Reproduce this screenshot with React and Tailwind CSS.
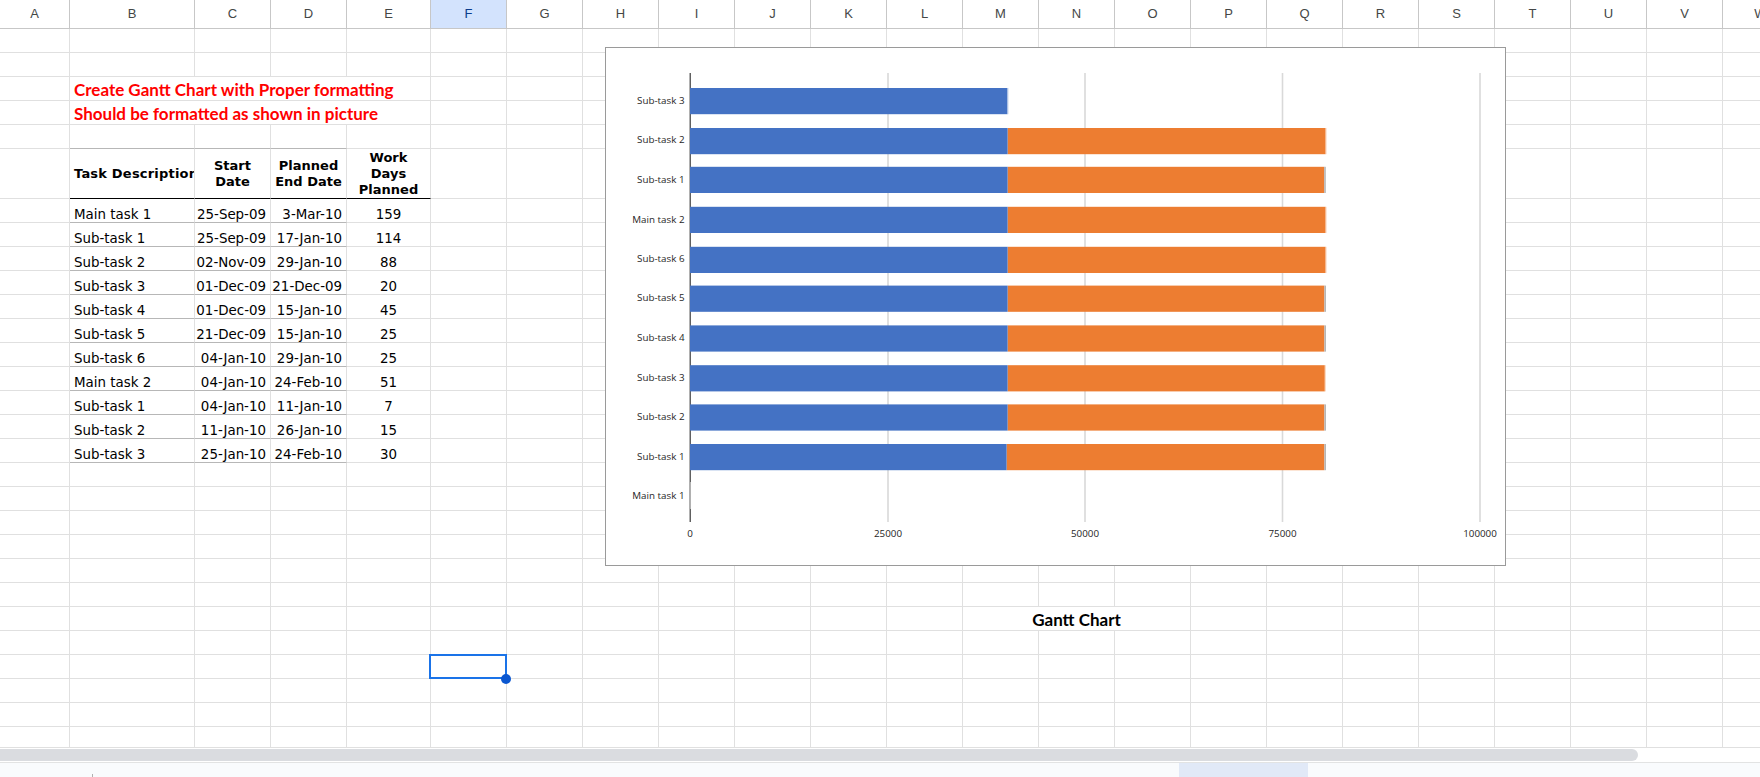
import React from "react";

const COLS = "ABCDEFGHIJKLMNOPQRSTUVW".split("");
const ROW_GRID = "grid grid-cols-[70px_125px_76px_76px_84px_repeat(18,76px)]";
const CELL = "border-r border-b border-[#e0e0e0] min-w-0 overflow-hidden whitespace-nowrap";
const TABLE_FONT = "[font-family:'DejaVu_Sans',sans-serif] text-[13.4px] leading-[14px] text-black";
const HEAD_FONT = "[font-family:'DejaVu_Sans',sans-serif] text-[13px] font-bold leading-[16px] text-black";
const CALIBRI = "[font-family:Lato,sans-serif] font-bold text-[17px] leading-[20px] pt-[2px]";

const TASKS = [
  ["Main task 1", "25-Sep-09", "3-Mar-10", "159"],
  ["Sub-task 1", "25-Sep-09", "17-Jan-10", "114"],
  ["Sub-task 2", "02-Nov-09", "29-Jan-10", "88"],
  ["Sub-task 3", "01-Dec-09", "21-Dec-09", "20"],
  ["Sub-task 4", "01-Dec-09", "15-Jan-10", "45"],
  ["Sub-task 5", "21-Dec-09", "15-Jan-10", "25"],
  ["Sub-task 6", "04-Jan-10", "29-Jan-10", "25"],
  ["Main task 2", "04-Jan-10", "24-Feb-10", "51"],
  ["Sub-task 1", "04-Jan-10", "11-Jan-10", "7"],
  ["Sub-task 2", "11-Jan-10", "26-Jan-10", "15"],
  ["Sub-task 3", "25-Jan-10", "24-Feb-10", "30"],
];

// top to bottom, as the chart draws them
const BARS = [
  { label: "Sub-task 3", base: 104, top: 88, blue: 1007.6 },
  { label: "Sub-task 2", base: 143, top: 128, blue: 1007.6, end: 1325.6 },
  { label: "Sub-task 1", base: 183, top: 166.8, blue: 1007.6, end: 1324.2, cap: true },
  { label: "Main task 2", base: 222.5, top: 206.8, blue: 1007.6, end: 1325.6 },
  { label: "Sub-task 6", base: 262, top: 246.8, blue: 1007.6, end: 1325.6 },
  { label: "Sub-task 5", base: 301, top: 285.6, blue: 1007.6, end: 1324.4, cap: true },
  { label: "Sub-task 4", base: 340.5, top: 325.4, blue: 1007.6, end: 1324.4, cap: true },
  { label: "Sub-task 3", base: 380.5, top: 365.2, blue: 1007.6, end: 1324.8 },
  { label: "Sub-task 2", base: 420, top: 404.4, blue: 1007.6, end: 1324.4, cap: true },
  { label: "Sub-task 1", base: 459.5, top: 444, blue: 1006.6, end: 1324.4, cap: true },
];

const TICKS = [
  { x: 690, label: "0" },
  { x: 888, label: "25000" },
  { x: 1085, label: "50000" },
  { x: 1282.5, label: "75000" },
  { x: 1480, label: "100000" },
];

const CHART_TEXT = "[font-family:'Open_Sans',sans-serif] text-[9.8px] fill-[#262626]";

function BlankCells({ count }) {
  return Array.from({ length: count }, (_, i) => <div key={i} className={CELL} />);
}

function BlankRow() {
  return (
    <div className={`${ROW_GRID} h-[24px]`}>
      <BlankCells count={23} />
    </div>
  );
}

function TitleRow({ children }) {
  return (
    <div className={`${ROW_GRID} h-[24px]`}>
      <div className={CELL} />
      <div className={`${CELL} col-span-4 pl-[4px] flex items-center text-[#ff0000] ${CALIBRI}`}>{children}</div>
      <BlankCells count={18} />
    </div>
  );
}

function TableHeader() {
  const gray = "border-t border-t-[#b7b7b7] -mt-px";
  return (
    <div className={`${ROW_GRID} h-[50px]`}>
      <div className={CELL} />
      <div className={`${CELL} ${gray} ${HEAD_FONT} tracking-[0.2px] h-[51px] border-b-black pl-[4px] flex items-center`}>Task Description</div>
      <div className={`${CELL} ${gray} ${HEAD_FONT} h-[51px] border-b-black flex items-center justify-center text-center`}>
        Start<br />Date
      </div>
      <div className={`${CELL} ${gray} ${HEAD_FONT} h-[51px] border-b-black flex items-center justify-center text-center`}>
        Planned<br />End Date
      </div>
      <div className={`${CELL} ${HEAD_FONT} border-b-black flex items-center justify-center text-center`}>
        Work<br />Days<br />Planned
      </div>
      <BlankCells count={18} />
    </div>
  );
}

function TaskRow({ task }) {
  const line = "border-b-[#b7b7b7]";
  return (
    <div className={`${ROW_GRID} h-[24px]`}>
      <div className={CELL} />
      <div className={`${CELL} ${line} ${TABLE_FONT} pl-[4px] flex items-end`}>{task[0]}</div>
      <div className={`${CELL} ${line} ${TABLE_FONT} pr-[4px] flex items-end justify-end`}>{task[1]}</div>
      <div className={`${CELL} ${line} ${TABLE_FONT} pr-[4px] flex items-end justify-end`}>{task[2]}</div>
      <div className={`${CELL} ${TABLE_FONT} flex items-end justify-center`}>{task[3]}</div>
      <BlankCells count={18} />
    </div>
  );
}

function GanttLabelRow() {
  return (
    <div className={`${ROW_GRID} h-[24px]`}>
      <BlankCells count={12} />
      <div className={`${CELL} col-span-3 flex items-center justify-center text-black ${CALIBRI}`}>Gantt Chart</div>
      <BlankCells count={8} />
    </div>
  );
}

function SelectedRow() {
  return (
    <div className={`${ROW_GRID} h-[24px]`}>
      <BlankCells count={5} />
      <div className="relative border-r border-b border-[#e0e0e0]">
        <div className="absolute left-[-2px] top-[-1px] w-[78px] h-[25px] border-2 border-[#1a73e8]" />
        <div className="absolute left-[70px] top-[19px] w-[10px] h-[10px] rounded-full bg-[#0b57d0]" />
      </div>
      <BlankCells count={17} />
    </div>
  );
}

function Chart() {
  return (
    <div className="absolute left-[605px] top-[47px] w-[901px] h-[519px] bg-white border border-[#9a9a9a]">
      <svg width="899" height="517" viewBox="606 48 899 517" className="block">
        {TICKS.slice(1).map((t) => (
          <rect key={t.x} x={t.x - 0.8} y="73" width="1.6" height="449" fill="#d9d9d9" />
        ))}
        <rect x="689.6" y="73" width="1.2" height="449" fill="#3a3a3a" />
        <rect x="689.6" y="482" width="1.4" height="27" fill="#b0b0b0" />
        {BARS.map((b, i) => (
          <g key={i}>
            <text x="684.5" y={b.base} textAnchor="end" className={CHART_TEXT}>{b.label}</text>
            {b.end && <rect x={b.blue} y={b.top} width={b.end - b.blue} height="26.2" fill="#ed7d31" />}
            {b.end && <rect x={b.end} y={b.top} width={b.cap ? 1.6 : 0.8} height="26.2" fill={b.cap ? "#b5b5b5" : "#f7c4a0"} />}
            <rect x="690" y={b.top} width={b.blue - 690} height="26.2" fill="#4472c4" />
            {!b.end && <rect x={b.blue} y={b.top} width="1" height="26.2" fill="#d5def0" />}
          </g>
        ))}
        <text x="684.5" y="498.5" textAnchor="end" className={CHART_TEXT}>Main task 1</text>
        {TICKS.map((t) => (
          <text key={t.label} x={t.x} y="537" textAnchor="middle" className={CHART_TEXT}>{t.label}</text>
        ))}
      </svg>
    </div>
  );
}

export default function App() {
  return (
    <div className="relative w-[1760px] h-[777px] overflow-hidden bg-white flex flex-col">
      <div className={`${ROW_GRID} h-[29px] shrink-0`}>
        {COLS.map((c) => (
          <div
            key={c}
            className={`border-r border-b border-[#c7c7c7] flex items-center justify-center [font-family:'Liberation_Sans',sans-serif] text-[13px] ${
              c === "F" ? "bg-[#d3e3fd] text-[#0b3c8c]" : "text-[#444746]"
            }`}
          >
            {c}
          </div>
        ))}
      </div>

      <div className="h-[719px] shrink-0 overflow-hidden border-b border-[#e0e0e0]">
        <BlankRow />
        <BlankRow />
        <TitleRow>Create Gantt Chart with Proper formatting</TitleRow>
        <TitleRow>Should be formatted as shown in picture</TitleRow>
        <BlankRow />
        <TableHeader />
        {TASKS.map((t, i) => (
          <TaskRow key={i} task={t} />
        ))}
        <BlankRow />
        <BlankRow />
        <BlankRow />
        <BlankRow />
        <BlankRow />
        <BlankRow />
        <GanttLabelRow />
        <BlankRow />
        <SelectedRow />
        <BlankRow />
        <BlankRow />
        <BlankRow />
      </div>

      <div className="h-[15px] shrink-0 pt-px border-b border-[#e2e3e3]">
        <div className="w-[1638px] h-[12px] bg-[#dadce0] rounded-r-[6px]" />
      </div>

      <div className="flex-1 bg-[#f9fbfd] flex">
        <div className="ml-[92px] w-px h-[3px] bg-[#b0b0b0] self-end" />
        <div className="ml-[1086px] w-[129px] bg-[#e1e9f7]" />
      </div>

      <Chart />
    </div>
  );
}
